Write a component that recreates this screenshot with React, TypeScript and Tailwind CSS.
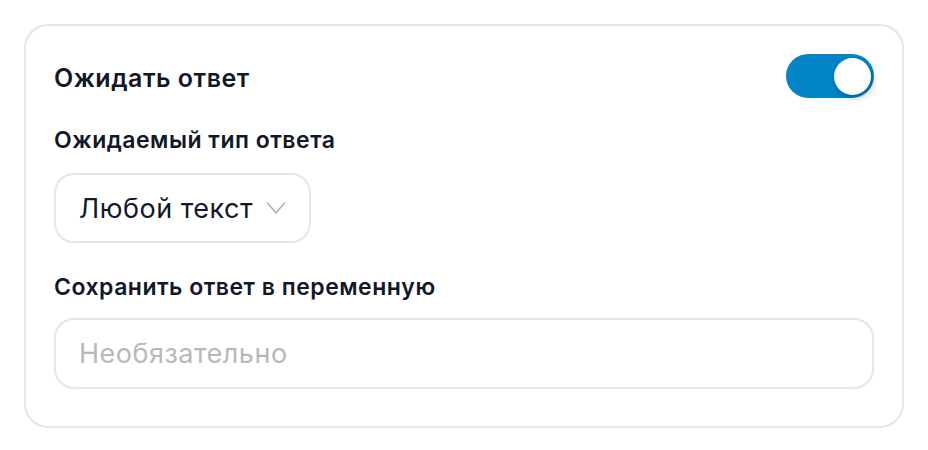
import React, { useState } from "react";

function Chevron() {
  return (
    <svg width="20" height="14" viewBox="0 0 20 14" fill="none" className="text-[#b0b0b4]">
      <path d="M1.5 2 L10 12 L18.5 2" stroke="currentColor" strokeWidth="1.6" strokeLinecap="round" strokeLinejoin="round" />
    </svg>
  );
}

export default function App() {
  const [on, setOn] = useState(true);
  return (
    <div className="w-[928px] h-[450px] bg-white p-[24px] font-['Inter','Noto_Sans',sans-serif] tracking-[0.5px]">
      <div className="h-[404px] rounded-[24px] border-2 border-[#e6e6ea] px-[28px] pt-[28px]">
        <div className="flex items-center justify-between h-[44px]">
          <span className="mt-[4px] text-[25px] font-semibold text-[#111827] leading-none">Ожидать ответ</span>
          <button
            onClick={() => setOn(!on)}
            className="w-[88px] h-[44px] rounded-full bg-[#0284c7] flex items-center justify-end px-[3px]"
          >
            <span className="block w-[37px] h-[37px] rounded-full bg-white shadow-[2px_3px_6px_rgba(0,0,0,0.25)]" />
          </button>
        </div>
        <div className="mt-[30px] text-[23px] font-semibold text-[#111827] leading-[24px]">Ожидаемый тип ответа</div>
        <div className="mt-[21px] inline-flex items-center gap-[13px] h-[70px] rounded-[20px] border-2 border-[#e6e6ea] pl-[23px] pr-[23px]">
          <span className="text-[27px] text-[#111827] leading-none">Любой текст</span>
          <Chevron />
        </div>
        <div className="mt-[32px] text-[23px] font-semibold text-[#111827] leading-[24px]">Сохранить ответ в переменную</div>
        <div className="mt-[19px] flex items-center h-[71px] rounded-[20px] border-2 border-[#e6e6ea] px-[23px]">
          <span className="text-[27px] text-[#b8b8bc] leading-none">Необязательно</span>
        </div>
      </div>
    </div>
  );
}
